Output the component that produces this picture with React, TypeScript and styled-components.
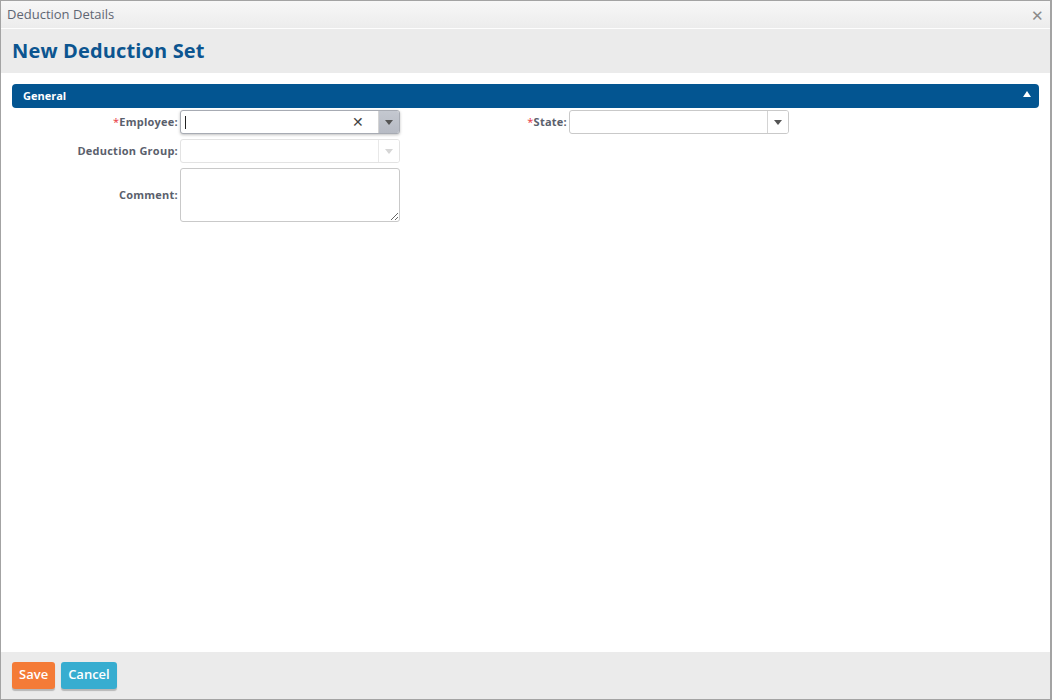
import React from "react";
import styled, { createGlobalStyle } from "styled-components";

const Global = createGlobalStyle`
  html, body { margin: 0; padding: 0; background: #fff; }
  body { font-family: "Open Sans", "Liberation Sans", Arial, sans-serif; }
  * { box-sizing: border-box; }
`;

const Window = styled.div`
  width: 1052px;
  height: 700px;
  border: 1px solid #a3a3a3;
  border-right-width: 2px;
  display: flex;
  flex-direction: column;
  background: #fff;
`;

const TitleBar = styled.div`
  height: 28px;
  flex: none;
  display: flex;
  align-items: center;
  justify-content: space-between;
  padding: 0 6px 2px 6px;
  background: linear-gradient(#f7f7f7, #ececec);
  border-bottom: 1px solid #fdfdfd;
  color: #5f6673;
  font-size: 13px;
`;

const CloseBtn = styled.span`
  color: #8a8a8a;
  font-size: 15px;
  line-height: 1;
  margin-top: 3px;
`;

const Header = styled.div`
  height: 44px;
  flex: none;
  background: #ebebeb;
  display: flex;
  align-items: center;
  padding: 0 11px 2px 11px;
`;

const Title = styled.h1`
  margin: 0;
  font-size: 20px;
  font-weight: 700;
  color: #0c5590;
  letter-spacing: 0.15px;
`;

const Content = styled.div`
  flex: 1;
  padding: 11px 11px 0 11px;
`;

const PanelHeader = styled.div`
  height: 24px;
  background: #035591;
  border-radius: 4px;
  display: flex;
  align-items: center;
  justify-content: space-between;
  padding: 0 8px 1px 11px;
  color: #fff;
  font-size: 11px;
  font-weight: 700;
`;

const Caret = styled.span`
  width: 0;
  height: 0;
  border-left: 4px solid transparent;
  border-right: 4px solid transparent;
  border-bottom: 6px solid #fff;
  margin-top: -3px;
`;

const FormGrid = styled.div`
  display: grid;
  grid-template-columns: 166px 220px 165px 220px;
  column-gap: 2px;
  row-gap: 5px;
  margin-top: 2px;
  align-items: center;
`;

const Label = styled.label`
  text-align: right;
  font-size: 11px;
  font-weight: 700;
  color: #5a606c;
  letter-spacing: 0.25px;
  padding: 0 0 2px 0;
  align-self: center;
`;

const Req = styled.span`
  color: #e8323a;
  font-weight: 400;
`;

const Combo = styled.div<{ $focus?: boolean; $disabled?: boolean }>`
  height: 24px;
  display: flex;
  border: 1px solid ${(p) => (p.$focus ? "#a7abb3" : p.$disabled ? "#e3e3e3" : "#c9c9c9")};
  border-radius: 3px;
  background: #fff;
  overflow: hidden;
  box-shadow: ${(p) => (p.$focus ? "0 1px 3px rgba(0,0,0,0.25)" : "none")};
`;

const ComboInput = styled.div`
  flex: 1;
  display: flex;
  align-items: center;
  padding-left: 4px;
  position: relative;
`;

const Cursor = styled.span`
  width: 1px;
  height: 13px;
  background: #222;
`;

const Clear = styled.span`
  position: absolute;
  right: 14px;
  top: 4px;
  font-size: 14px;
  color: #444;
  line-height: 1;
`;

const ArrowBtn = styled.div<{ $focus?: boolean; $disabled?: boolean }>`
  width: 21px;
  display: flex;
  align-items: center;
  justify-content: center;
  border-left: 1px solid ${(p) => (p.$disabled ? "#e8e8e8" : "#d4d4d4")};
  background: ${(p) => (p.$focus ? "linear-gradient(#c4c8d0, #b7bbc4)" : "#fff")};
  &::after {
    content: "";
    width: 0;
    height: 0;
    border-left: 4px solid transparent;
    border-right: 4px solid transparent;
    border-top: 5px solid ${(p) => (p.$disabled ? "#d6d6d6" : "#555")};
    margin-top: 1px;
  }
`;

const TextArea = styled.textarea`
  width: 220px;
  height: 54px;
  border: 1px solid #c9c9c9;
  border-radius: 3px;
  resize: vertical;
  font-family: inherit;
  display: block;
`;

const Footer = styled.div`
  height: 47px;
  flex: none;
  background: #ebebeb;
  display: flex;
  align-items: flex-start;
  gap: 6px;
  padding: 10px 11px 0 11px;
`;

const Button = styled.button<{ $color: string }>`
  height: 27px;
  border: none;
  border-radius: 3px;
  background: ${(p) => p.$color};
  color: #fff;
  font-family: inherit;
  font-size: 13px;
  font-weight: 600;
  padding: 0 7px 3px 7px;
  box-shadow: 0 2px 1px rgba(0, 0, 0, 0.22);
  cursor: pointer;
`;

export default function App() {
  return (
    <>
      <Global />
      <Window>
        <TitleBar>
          <span>Deduction Details</span>
          <CloseBtn>✕</CloseBtn>
        </TitleBar>
        <Header>
          <Title>New Deduction Set</Title>
        </Header>
        <Content>
          <PanelHeader>
            <span>General</span>
            <Caret />
          </PanelHeader>
          <FormGrid>
            <Label>
              <Req>*</Req>Employee:
            </Label>
            <Combo $focus>
              <ComboInput>
                <Cursor />
                <Clear>✕</Clear>
              </ComboInput>
              <ArrowBtn $focus />
            </Combo>
            <Label>
              <Req>*</Req>State:
            </Label>
            <Combo>
              <ComboInput />
              <ArrowBtn />
            </Combo>

            <Label>Deduction Group:</Label>
            <Combo $disabled>
              <ComboInput />
              <ArrowBtn $disabled />
            </Combo>
            <span />
            <span />

            <Label>Comment:</Label>
            <TextArea />
            <span />
            <span />
          </FormGrid>
        </Content>
        <Footer>
          <Button $color="#f47b37">Save</Button>
          <Button $color="#37add0">Cancel</Button>
        </Footer>
      </Window>
    </>
  );
}
